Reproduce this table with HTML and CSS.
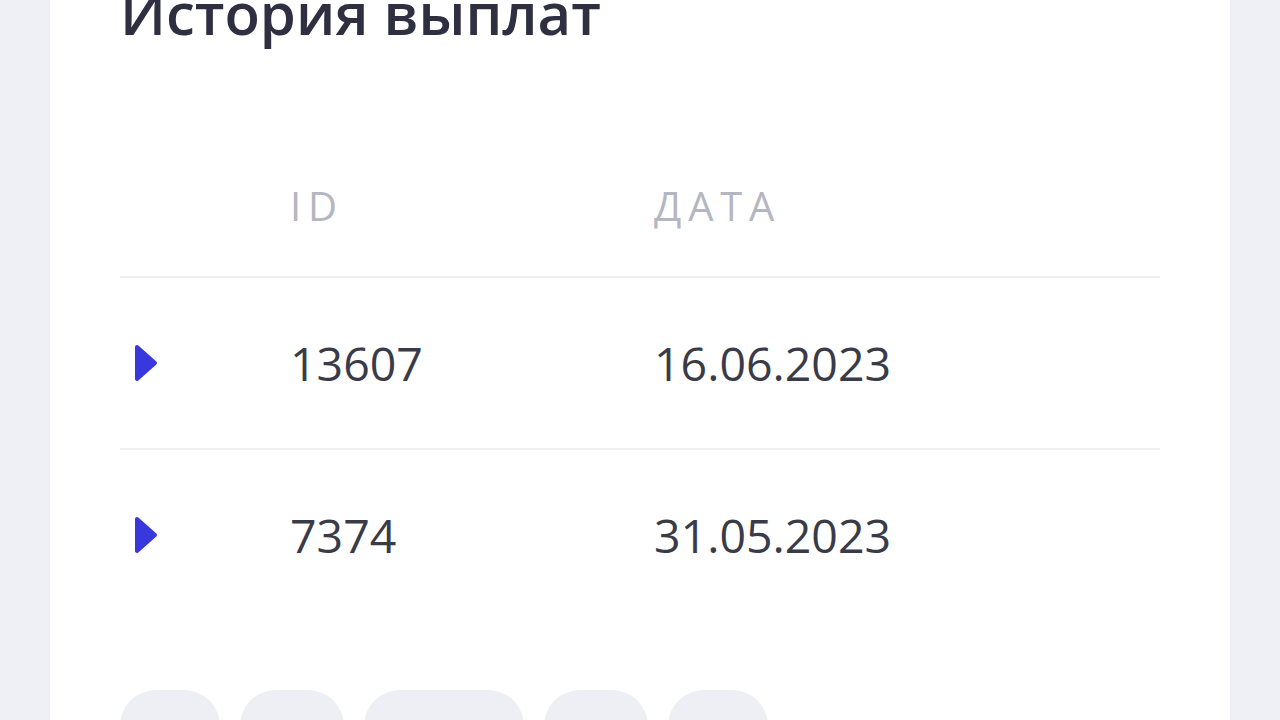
FILE: index.html
```html
<!DOCTYPE html>
<html lang="ru">
<head>
  <meta charset="UTF-8">
  <meta name="viewport" content="width=device-width, initial-scale=1.0">
  <title>История выплат</title>
  <link rel="stylesheet" href="styles.css">
</head>
<body>
  <div class="card">
    <h1>История выплат</h1>

    <div class="payouts">
      <div class="payouts-head">
        <span></span>
        <span>ID</span>
        <span>Дата</span>
      </div>

      <div class="payout-row">
        <span class="toggle">
          <svg viewBox="0 0 24 38"><path d="M3 3 L21 19 L3 35 Z"/></svg>
        </span>
        <span>13607</span>
        <span>16.06.2023</span>
      </div>

      <div class="payout-row">
        <span class="toggle">
          <svg viewBox="0 0 24 38"><path d="M3 3 L21 19 L3 35 Z"/></svg>
        </span>
        <span>7374</span>
        <span>31.05.2023</span>
      </div>
    </div>

    <div class="pager">
      <span class="page-btn"></span>
      <span class="page-btn wide-1"></span>
      <span class="page-btn wide-2"></span>
      <span class="page-btn wide-1"></span>
      <span class="page-btn"></span>
    </div>
  </div>
</body>
</html>
```

FILE: styles.css
```css
body {
  margin: 0;
  padding: 0;
  background-color: #eff0f5;
  font-family: "Open Sans", "Noto Sans", sans-serif;
  height: 720px;
  overflow: hidden;
}

.card {
  margin: -17px 50px 0 50px;
  padding: 0 70px;
  background: #fff;
  min-height: 800px;
}

h1 {
  margin: 0;
  font-size: 58px;
  line-height: 60px;
  font-weight: 600;
  color: #2e2f40;
}

.payouts {
  margin-top: 143px;
}

.payouts-head,
.payout-row {
  display: grid;
  grid-template-columns: 170px 364px 1fr;
  align-items: center;
  border-bottom: 2px solid #eef0f3;
}

.payouts-head {
  padding-bottom: 50px;
  font-size: 40px;
  line-height: 40px;
  letter-spacing: 0.17em;
  text-transform: uppercase;
  color: #b4b6c1;
}

.payout-row {
  height: 170px;
  font-size: 46.5px;
  color: #3a3b49;
}

.payout-row:last-child {
  border-bottom: none;
}

.toggle {
  display: flex;
  padding-left: 14px;
}

.toggle svg {
  width: 24px;
  height: 40px;
}

.toggle path {
  fill: #3838dc;
  stroke: #3838dc;
  stroke-width: 4;
  stroke-linejoin: round;
}

.pager {
  display: flex;
  gap: 20px;
  margin-top: 70px;
}

.page-btn {
  width: 100px;
  height: 80px;
  border-radius: 36px;
  background: #edeff4;
}

.page-btn.wide-1 {
  width: 104px;
}

.page-btn.wide-2 {
  width: 160px;
}
```
